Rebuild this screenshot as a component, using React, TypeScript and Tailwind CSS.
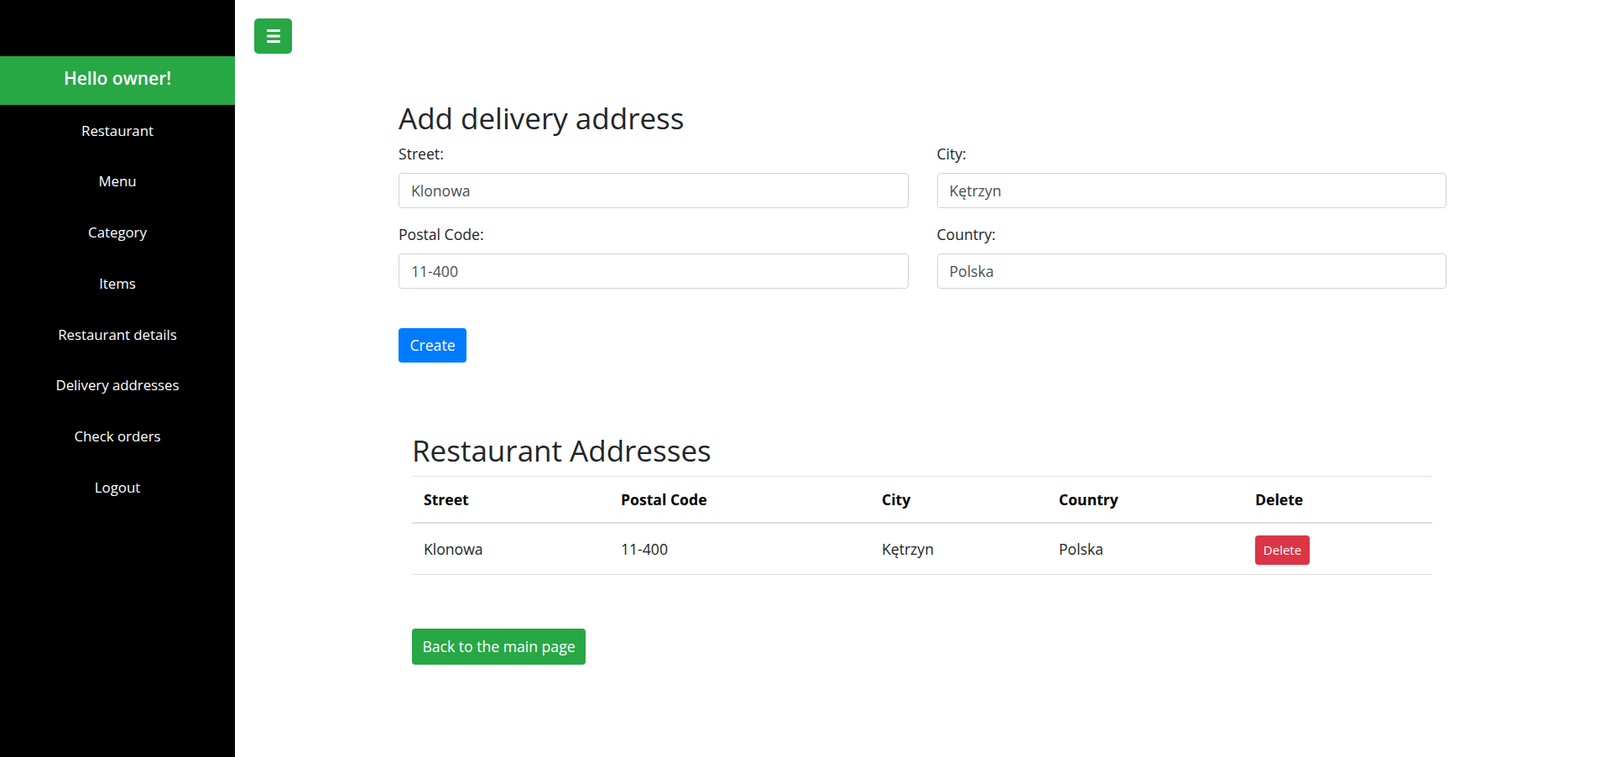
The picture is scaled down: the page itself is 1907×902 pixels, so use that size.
const navItems = [
  "Restaurant",
  "Menu",
  "Category",
  "Items",
  "Restaurant details",
  "Delivery addresses",
  "Check orders",
  "Logout",
];

function Field({ label, value }: { label: string; value: string }) {
  return (
    <div className="mb-[18px]">
      <label className="block h-[26px] leading-[26px] mb-[10px] text-[#212529]">{label}</label>
      <input
        readOnly
        value={value}
        className="block w-full h-[42px] px-[14px] border border-[#ced4da] rounded-[4px] text-[#495057] bg-white outline-none"
      />
    </div>
  );
}

export default function App() {
  return (
    <div className="flex min-h-screen bg-white text-[17.6px] font-['Open_Sans',sans-serif]">
      <aside className="w-[280px] shrink-0 bg-black text-white min-h-screen">
        <div className="h-[67px]" />
        <div className="h-[58px] bg-[#28a745] flex items-center justify-center pb-[6px]">
          <span className="text-[21px] font-semibold leading-none">Hello owner!</span>
        </div>
        <nav className="flex flex-col text-[16.8px]">
          {navItems.map((item) => (
            <a key={item} href="#" className="h-[60.7px] flex items-center justify-center text-white">
              {item}
            </a>
          ))}
        </nav>
      </aside>

      <main className="flex-1 relative">
        <div className="pt-[22px] pl-[23px]">
          <button className="w-[45px] h-[42px] bg-[#28a745] rounded-[5px] flex items-center justify-center">
            <svg width="16" height="16" viewBox="0 0 16 16">
              <rect x="0" y="0" width="16" height="3" rx="1" fill="white" />
              <rect x="0" y="6.5" width="16" height="3" rx="1" fill="white" />
              <rect x="0" y="13" width="16" height="3" rx="1" fill="white" />
            </svg>
          </button>
        </div>

        <div className="ml-[195px] w-[1249px]">
          <h1 className="mt-[56px] h-[42px] leading-[42px] text-[35px] font-medium text-[#212529] mb-[8px]">
            Add delivery address
          </h1>
          <div className="grid grid-cols-2 gap-x-[34px]">
            <Field label="Street:" value="Klonowa" />
            <Field label="City:" value="Kętrzyn" />
            <Field label="Postal Code:" value="11-400" />
            <Field label="Country:" value="Polska" />
          </div>
          <button className="mt-[29px] h-[41px] w-[81px] bg-[#007bff] text-white rounded-[4px]">Create</button>
        </div>

        <div className="ml-[211px] w-[1216px] mt-[84px]">
          <h2 className="h-[42px] leading-[42px] text-[35px] font-medium text-[#212529] mb-[9px]">
            Restaurant Addresses
          </h2>
          <table className="w-full border-collapse text-left">
            <thead>
              <tr className="border-t border-[#dee2e6] border-b-2">
                <th className="w-[235px] h-[55px] px-[14px] font-bold text-black">Street</th>
                <th className="w-[311px] px-[14px] font-bold text-black">Postal Code</th>
                <th className="w-[211px] px-[14px] font-bold text-black">City</th>
                <th className="w-[234px] px-[14px] font-bold text-black">Country</th>
                <th className="px-[14px] font-bold text-black">Delete</th>
              </tr>
            </thead>
            <tbody>
              <tr className="border-t-2 border-b border-[#dee2e6] text-[#212529]">
                <td className="h-[62px] px-[14px]">Klonowa</td>
                <td className="px-[14px]">11-400</td>
                <td className="px-[14px]">Kętrzyn</td>
                <td className="px-[14px]">Polska</td>
                <td className="px-[14px]">
                  <button className="h-[35px] w-[65px] bg-[#dc3545] text-white text-[15px] rounded-[4px] mt-[3px]">
                    Delete
                  </button>
                </td>
              </tr>
            </tbody>
          </table>
          <button className="mt-[64px] h-[43px] w-[207px] bg-[#28a745] text-white rounded-[4px]">
            Back to the main page
          </button>
        </div>
      </main>
    </div>
  );
}
